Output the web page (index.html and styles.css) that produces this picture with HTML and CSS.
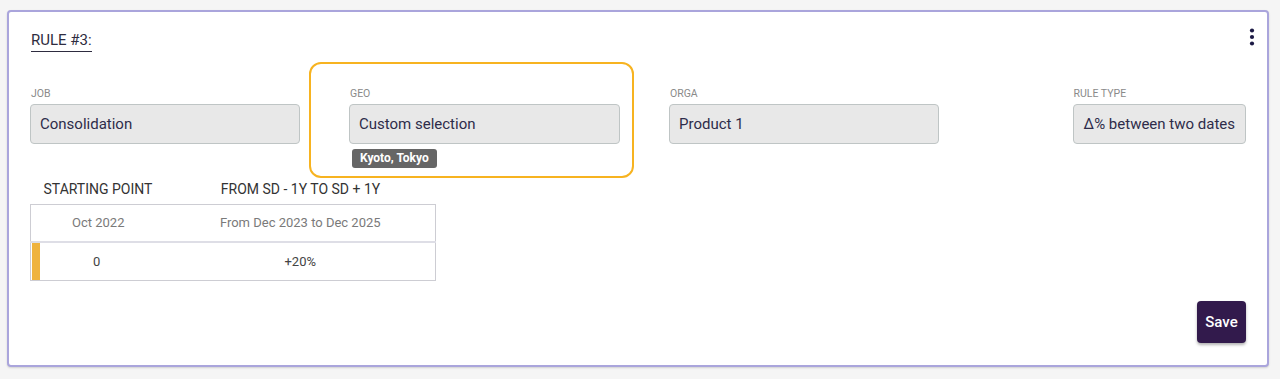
FILE: index.html
```html
<!DOCTYPE html>
<html lang="en">
<head>
    <meta charset="UTF-8">
    <meta name="viewport" content="width=device-width, initial-scale=1.0">
    <title>Rule #3</title>
    <link rel="stylesheet" href="styles.css">
</head>
<body>

<div class="rule-card">
    <div class="rule-header">
        <h3 class="rule-title">RULE #3:</h3>
        <button class="menu-btn" aria-label="More">
            <svg width="6" height="18" viewBox="0 0 6 18">
                <circle cx="3" cy="2.5" r="2.1" fill="#1c1a45"/>
                <circle cx="3" cy="9" r="2.1" fill="#1c1a45"/>
                <circle cx="3" cy="15.5" r="2.1" fill="#1c1a45"/>
            </svg>
        </button>
    </div>

    <div class="fields">
        <div class="field field-job">
            <label>Job</label>
            <div class="select-box">Consolidation</div>
        </div>
        <div class="field-highlight">
            <div class="field field-geo">
                <label>Geo</label>
                <div class="select-box">Custom selection</div>
                <span class="tag">Kyoto, Tokyo</span>
            </div>
        </div>
        <div class="field field-orga">
            <label>Orga</label>
            <div class="select-box">Product 1</div>
        </div>
        <div class="field field-type">
            <label>Rule type</label>
            <div class="select-box">Δ% between two dates</div>
        </div>
    </div>

    <table class="rule-table">
        <thead>
            <tr>
                <th class="col-start">Starting point</th>
                <th class="col-range">From SD - 1Y to SD + 1Y</th>
            </tr>
        </thead>
        <tbody>
            <tr class="row-dates">
                <td>Oct 2022</td>
                <td>From Dec 2023 to Dec 2025</td>
            </tr>
            <tr class="row-values">
                <td class="marked">0</td>
                <td>+20%</td>
            </tr>
        </tbody>
    </table>

    <div class="actions">
        <button class="save-btn">Save</button>
    </div>
</div>

</body>
</html>
```

FILE: styles.css
```css
* {
    box-sizing: border-box;
}
body {
    margin: 0;
    padding: 10px 11px 12px 7px;
    background-color: #f5f5f5;
    font-family: Roboto, "Liberation Sans", Arial, sans-serif;
}
.rule-card {
    background-color: #fff;
    border: 2px solid #aaa5dc;
    border-radius: 4px;
    box-shadow: 0 1px 2px rgba(0, 0, 0, 0.15);
    height: 357px;
    padding: 14px 21px 0 21px;
}
.rule-header {
    display: flex;
    justify-content: space-between;
    align-items: flex-start;
}
.rule-title {
    margin: 4px 0 0 1px;
    font-size: 15px;
    font-weight: 400;
    color: #2e2c40;
    line-height: 20px;
    padding-bottom: 1px;
    border-bottom: 1px solid #2e2c40;
}
.menu-btn {
    background: none;
    border: none;
    padding: 0;
    margin: 2px -9px 0 0;
    cursor: pointer;
    line-height: 0;
}
.fields {
    display: flex;
    align-items: flex-start;
    margin-top: 10px;
}
.field label {
    display: block;
    font-size: 10.5px;
    text-transform: uppercase;
    color: #8a8a8a;
    line-height: 12px;
    margin: 0 0 4px 1px;
}
.select-box {
    height: 40px;
    background-color: #e8e8e8;
    border: 1px solid #bfc5c5;
    border-radius: 4px;
    padding: 0 9px;
    font-size: 15px;
    line-height: 38px;
    color: #2e2c4a;
    white-space: nowrap;
}
.field-job,
.field-orga {
    width: 270px;
    margin-top: 26px;
}
.field-highlight {
    margin-left: 9px;
    width: 325px;
    height: 116px;
    border: 2px solid #f7b320;
    border-radius: 12px;
    padding: 24px 12px 0 38px;
}
.field-geo {
    width: 271px;
}
.tag {
    display: inline-block;
    margin: 5px 0 0 3px;
    padding: 0 8px;
    background-color: #666;
    color: #fff;
    font-size: 12px;
    font-weight: 700;
    line-height: 19px;
    border-radius: 3px;
}
.field-orga {
    margin-left: 35px;
}
.field-type {
    margin-left: auto;
    margin-top: 26px;
}
.field-type .select-box {
    padding: 0 10px;
}
.rule-table {
    border-collapse: collapse;
    margin-top: 1px;
    width: 406px;
    font-size: 13px;
}
.rule-table th {
    font-size: 14px;
    font-weight: 400;
    text-transform: uppercase;
    color: #333;
    height: 25px;
    padding: 0 0 4px;
    vertical-align: middle;
}
.col-start {
    width: 135px;
}
.rule-table tbody tr td {
    text-align: center;
    height: 38px;
}
.rule-table tbody {
    border: 1px solid #cdcdd3;
}
.row-dates td {
    color: #7a7a7a;
    height: 39px;
    border-bottom: 2px solid #dedee6;
}
.row-values td {
    color: #444;
}
.row-values td.marked {
    box-shadow: inset 1px 0 0 #fff, inset 9px 0 0 #efb33e;
    padding-right: 4px;
}
.actions {
    display: flex;
    justify-content: flex-end;
    margin-top: 20px;
}
.save-btn {
    width: 49px;
    height: 42px;
    background-color: #321a4c;
    color: #fff;
    border: none;
    border-radius: 4px;
    font-family: inherit;
    font-size: 15px;
    font-weight: 500;
    box-shadow: 0 2px 3px rgba(0, 0, 0, 0.3);
    cursor: pointer;
}
```
